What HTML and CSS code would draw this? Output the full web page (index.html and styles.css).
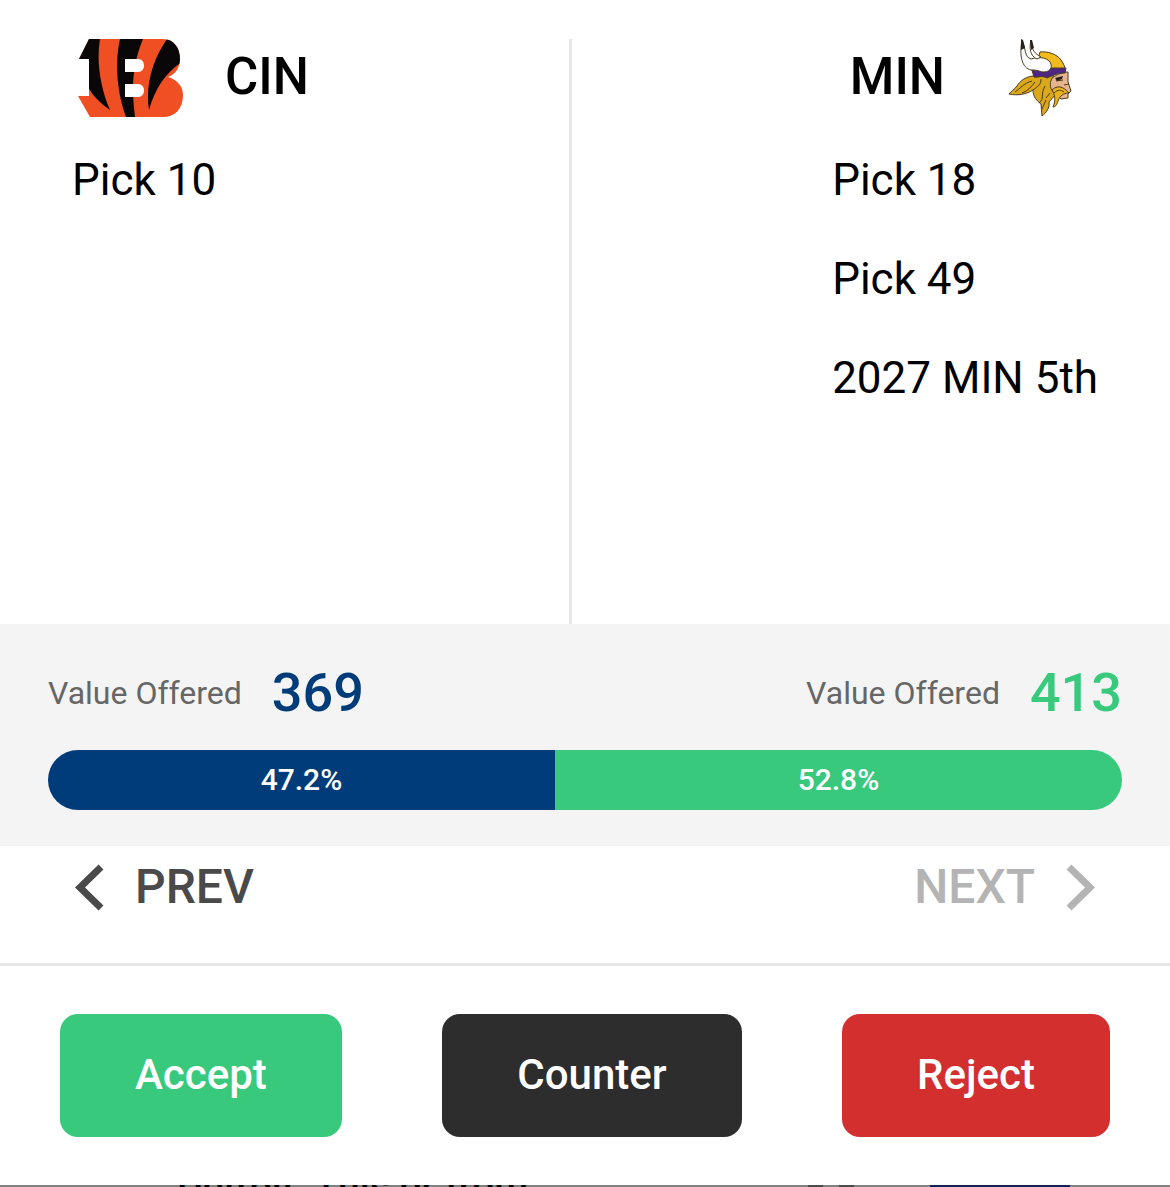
FILE: index.html
```html
<!DOCTYPE html>
<html lang="en">
<head>
  <meta charset="UTF-8" />
  <meta name="viewport" content="width=device-width, initial-scale=1.0"/>
  <title>Trade Offer</title>
  <link rel="stylesheet" href="styles.css">
</head>
<body>
  <main class="offer">
    <div class="teams">
      <section class="team">
        <header class="team-header">
          <svg class="logo" viewBox="0 0 117 78" role="img" aria-label="Bengals">
            <defs>
              <clipPath id="b-shape">
                <path d="M17 0H91C102 0 108 9 108 20C108 28 104 35 96 38C106 41 111 48 111 56C111 70 103 78 91 78H18L6 57H17V20H7Z"/>
              </clipPath>
            </defs>
            <g clip-path="url(#b-shape)">
              <path fill="#f04e23" d="M0 0H117V78H0Z"/>
              <path fill="#0a0708" d="M0 0H28C24 24 29 50 38 71C28 64 21 57 16 48V30H0Z"/>
              <path fill="#0a0708" d="M48 0H71C64 17 61 33 61 50C61 60 62 69 63 78H54C46 56 42 26 48 0Z"/>
              <path fill="#0a0708" d="M95 0L112 5L110 23C93 34 83 50 77 71C73 46 81 20 95 0Z"/>
            </g>
            <path fill="#fff" d="M53 20H66C74 20 74 33 66 33H53ZM53 45H66C74 45 74 58 66 58H53Z"/>
          </svg>
          <h2>CIN</h2>
        </header>
        <ul class="picks">
          <li>Pick 10</li>
        </ul>
      </section>

      <section class="team team-right">
        <header class="team-header">
          <h2>MIN</h2>
          <svg class="logo" viewBox="0 0 117 78" role="img" aria-label="Vikings">
            <g stroke="#4a3c20" stroke-width="1" stroke-linejoin="round">
              <path fill="#dba81c" d="M52 37C44 38 39 42 36 47C33 51 30 52 28 55C37 57 46 55 52 51C52 58 56 62 60 65L61 77C65 74 69 69 68 63L75 55L72 36Z"/>
              <path fill="#e6b48e" d="M71 39C77 35 82 33 87 33L87 43L90 52L87 55L87 59L80 60L74 54C69 51 68 45 71 39Z"/>
              <path fill="#f2bb1d" d="M57 20L59 13C66 12 76 15 80 21C83 25 84 28 84 31L68 32Z"/>
              <path fill="#4f2683" d="M50 28C55 31 62 32 70 29L85 29L84 34C76 34 71 37 66 39C61 36 56 39 53 38Z"/>
              <path fill="#fff" d="M50 31C41 29 38 17 41 1C45 9 43 18 50 20C59 17 68 19 70 25C72 31 65 35 58 32C55 31 53 31 50 31Z"/>
              <path fill="#fff" d="M50 1C50 8 52 14 60 18L56 20C49 17 48 9 50 1Z"/>
              <path fill="#e8b41d" d="M71 51C76 46 82 47 88 54C82 54 79 57 77 62C76 66 74 68 72 68C75 61 74 56 71 51Z"/>
            </g>
            <g fill="none" stroke="#4a3a12" stroke-width="1">
              <path d="M34 53C40 49 43 44 51 42M41 54C47 52 50 48 54 43M52 51C57 47 60 46 60 40M58 64C64 59 59 56 64 47M61 70L65 61M65 59L69 54M75 42L82 41M83 46L88 45M73 54C77 50 80 51 83 53"/>
            </g>
            <path fill="#29201f" d="M40 0L42 1L44 9L40 11ZM49 1L51 1L53 9L50 11ZM74 39L82 37L81 40L76 42Z"/>
          </svg>
        </header>
        <ul class="picks">
          <li>Pick 18</li>
          <li>Pick 49</li>
          <li>2027 MIN 5th</li>
        </ul>
      </section>
    </div>

    <section class="value">
      <div class="value-row">
        <p>Value Offered <strong class="navy">369</strong></p>
        <p>Value Offered <strong class="green">413</strong></p>
      </div>
      <div class="value-bar">
        <span class="share share-navy" style="width: 47.2%">47.2%</span>
        <span class="share share-green" style="width: 52.8%">52.8%</span>
      </div>
    </section>

    <nav class="pager">
      <button type="button">
        <svg class="chevron" viewBox="0 0 33 48" aria-hidden="true"><path d="M29 4L8 24.5L29 45"/></svg>
        PREV
      </button>
      <button type="button" disabled>
        NEXT
        <svg class="chevron" viewBox="0 0 33 48" aria-hidden="true"><path d="M4 4L25 24.5L4 45"/></svg>
      </button>
    </nav>

    <div class="actions">
      <button type="button" class="btn accept">Accept</button>
      <button type="button" class="btn counter">Counter</button>
      <button type="button" class="btn reject">Reject</button>
    </div>
  </main>

  <!-- dimmed page under the sheet -->
  <div class="behind">
    <span class="behind-text">Detroit. This or from</span>
    <span class="behind-mark"></span>
    <span class="behind-mark"></span>
    <span class="behind-block"></span>
  </div>
</body>
</html>
```

FILE: styles.css
```css
:root {
  --navy: #003c7a;
  --green: #38c97d;
  --red: #d32f2f;
  --dark: #2d2d2d;
  --line: #e8e8e8;
  --panel: #f4f4f4;
}
* {
  box-sizing: border-box;
}
body {
  margin: 0;
  height: 100vh;
  display: flex;
  flex-direction: column;
  overflow: hidden;
  background-color: #808080;
  color: #000;
  font-family: Roboto, sans-serif;
}
h2, p, ul {
  margin: 0;
  padding: 0;
}
button {
  border: none;
  font-family: inherit;
  font-weight: 500;
  cursor: pointer;
}
.offer {
  flex: 1;
  display: flex;
  flex-direction: column;
  background-color: #fff;
}
.teams {
  flex: 1;
  display: flex;
  justify-content: space-between;
  padding: 39px 72px 0;
}
.team {
  flex: 1 1 auto;
}
.team-right {
  display: flex;
  flex-direction: column;
  align-items: flex-end;
  border-left: 3px solid var(--line);
}
.team-header {
  display: flex;
  align-items: center;
  gap: 36px;
  height: 78px;
}
.team-header h2 {
  padding-bottom: 2px;
  font-size: 51px;
  font-weight: 500;
  line-height: 60px;
}
.logo {
  width: 117px;
  height: 78px;
}
.picks {
  list-style: none;
  padding-top: 36px;
  font-size: 44px;
  line-height: 54px;
}
.picks li + li {
  margin-top: 45px;
}
.value {
  padding: 36px 48px;
  background-color: var(--panel);
}
.value-row {
  display: flex;
  justify-content: space-between;
  margin-bottom: 24px;
}
.value-row p {
  display: flex;
  align-items: center;
  gap: 30px;
  color: #666;
  font-size: 32px;
  line-height: 66px;
}
.value-row strong {
  font-size: 54px;
  font-weight: 500;
}
.value-row .navy {
  color: var(--navy);
}
.value-row .green {
  color: var(--green);
}
.value-bar {
  display: flex;
  height: 60px;
  border-radius: 30px;
  overflow: hidden;
}
.share {
  color: #fff;
  font-size: 30px;
  font-weight: 500;
  line-height: 60px;
  text-align: center;
}
.share-navy {
  background-color: var(--navy);
}
.share-green {
  background-color: var(--green);
}
.pager {
  display: flex;
  justify-content: space-between;
  padding: 11px 72px 46px;
  border-bottom: 3px solid var(--line);
}
.pager button {
  display: flex;
  align-items: center;
  gap: 30px;
  padding: 0;
  background: none;
  color: #4a4a4a;
  font-size: 48px;
  line-height: 60px;
}
.pager button:disabled {
  color: #b4b4b4;
  cursor: default;
}
.chevron {
  width: 33px;
  height: 48px;
  fill: none;
  stroke: currentColor;
  stroke-width: 7;
}
.actions {
  display: flex;
  justify-content: space-between;
  padding: 48px 60px;
}
.btn {
  padding: 35px 75px 37px;
  border-radius: 18px;
  color: #fff;
  font-size: 42px;
  line-height: 51px;
}
.accept {
  background-color: var(--green);
}
.counter {
  background-color: var(--dark);
}
.reject {
  background-color: var(--red);
}
.behind {
  display: flex;
  height: 2px;
  padding: 0 100px 0 177px;
  overflow: hidden;
}
.behind-text {
  margin-right: auto;
  font-size: 39px;
  font-weight: 500;
  line-height: 4px;
  white-space: nowrap;
}
.behind-mark {
  width: 15px;
  margin-right: 16px;
  background-color: #4a4a4a;
}
.behind-block {
  width: 140px;
  margin-left: 60px;
  background-color: #0d2350;
}
```
